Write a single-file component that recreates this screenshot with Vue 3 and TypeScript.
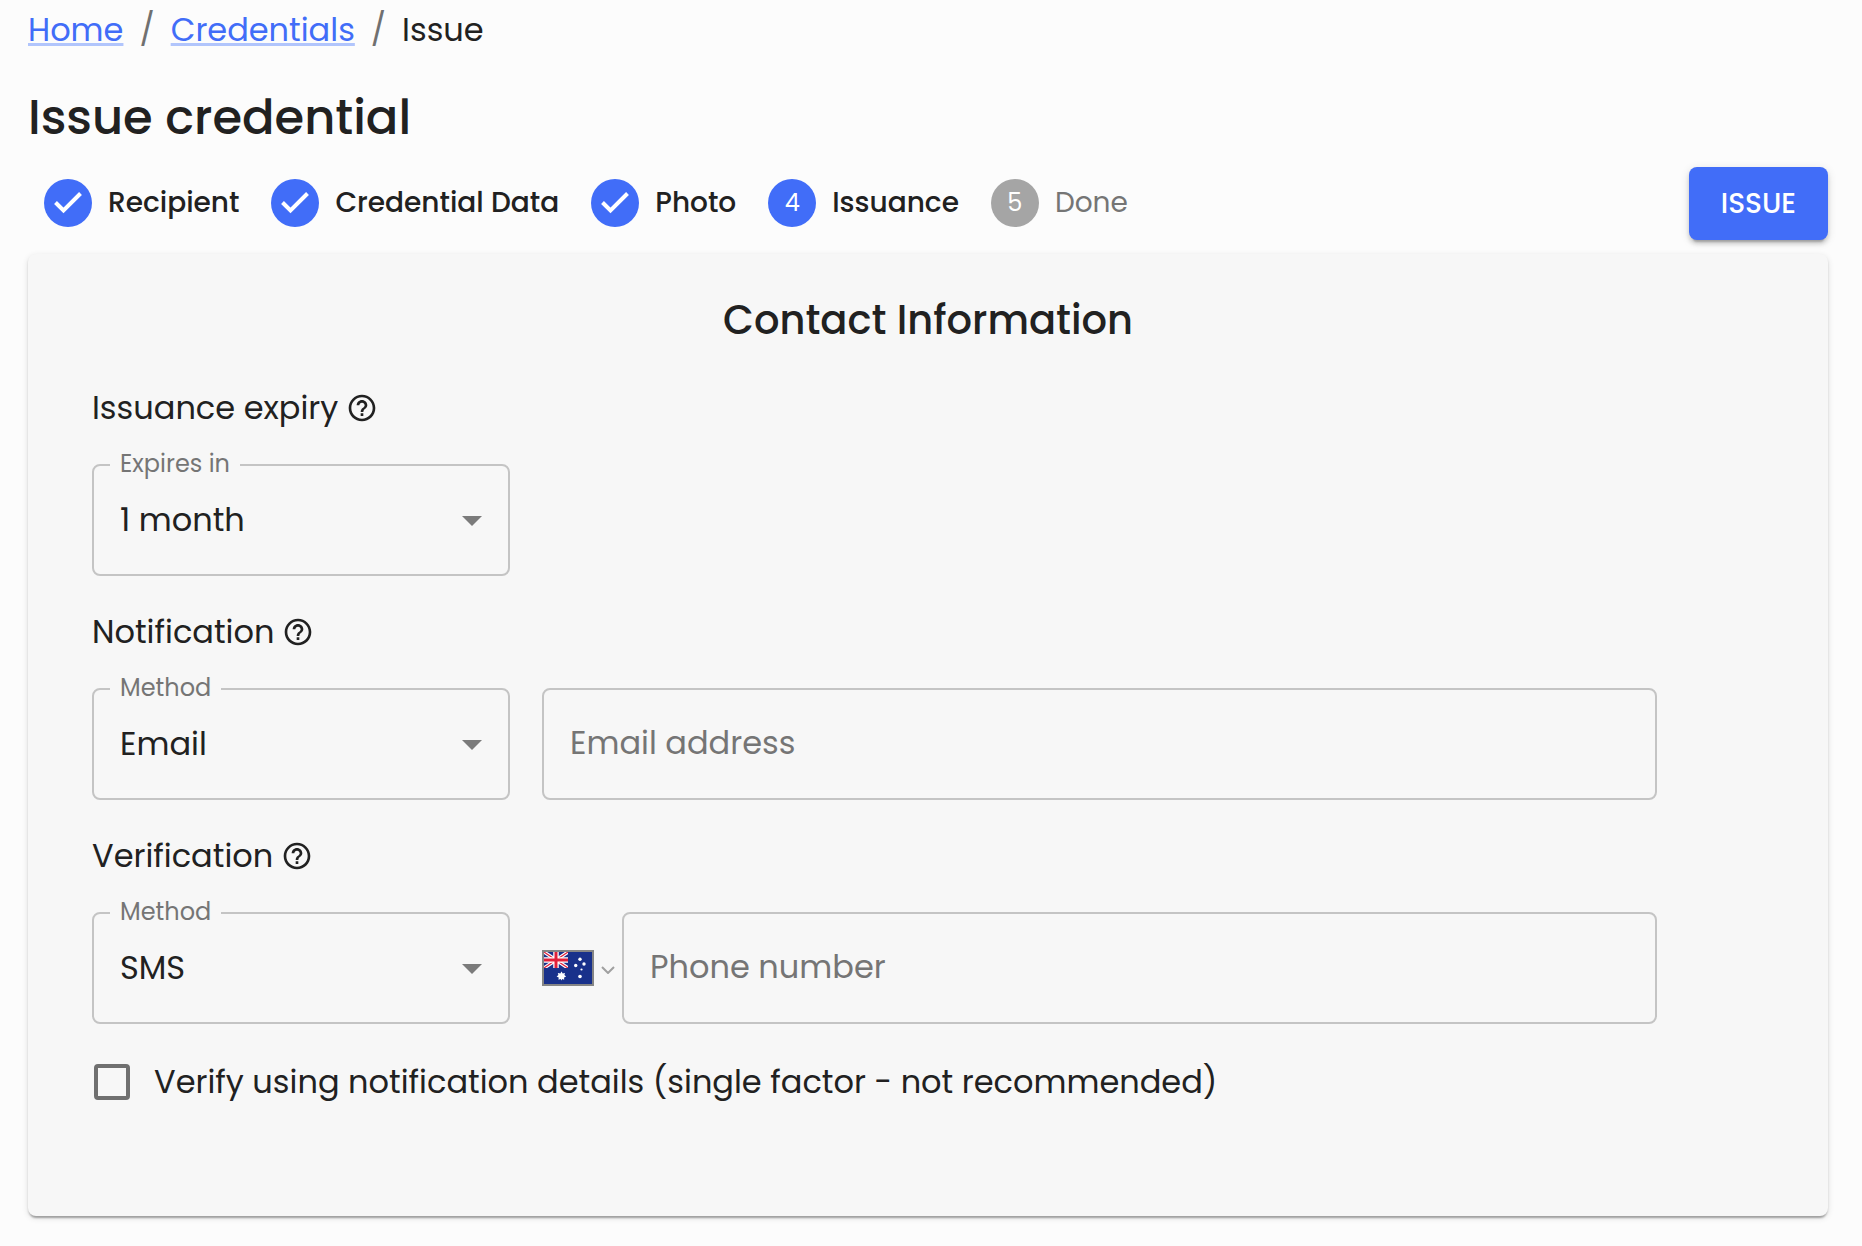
<script setup lang="ts">
import { ref } from 'vue'

interface Step {
  label: string
  state: 'done' | 'current' | 'todo'
}

const steps: Step[] = [
  { label: 'Recipient', state: 'done' },
  { label: 'Credential Data', state: 'done' },
  { label: 'Photo', state: 'done' },
  { label: 'Issuance', state: 'current' },
  { label: 'Done', state: 'todo' },
]

const expiry = ref('1 month')
const notifyBy = ref('Email')
const verifyBy = ref('SMS')
const email = ref('')
const phone = ref('')
const singleFactor = ref(false)

const helpPath =
  'M11 18h2v-2h-2v2zm1-16C6.48 2 2 6.48 2 12s4.48 10 10 10 10-4.480 10-10S17.520 2 12 2zm0 18c-4.410 0-8-3.590-8-8s3.590-8 8-8 8 3.590 8 8-3.590 8-8 8zm0-14c-2.210 0-4 1.790-4 4h2c0-1.100.9-2 2-2s2 .9 2 2c0 2-3 1.750-3 5h2c0-2.250 3-2.500 3-5 0-2.210-1.790-4-4-4z'
</script>

<template>
  <main class="page">
    <nav class="crumbs" aria-label="Breadcrumb">
      <a href="#home">Home</a>
      <span class="slash">/</span>
      <a href="#credentials">Credentials</a>
      <span class="slash">/</span>
      <span>Issue</span>
    </nav>

    <h1 class="title">Issue credential</h1>

    <div class="toolbar">
      <ol class="steps">
        <li v-for="(step, i) in steps" :key="step.label" class="step" :class="step.state">
          <span class="dot">
            <svg v-if="step.state === 'done'" class="tick" viewBox="0 0 48 48" aria-hidden="true">
              <path d="M11.500 23.500l8 8L36.500 14.500" />
            </svg>
            <template v-else>{{ i + 1 }}</template>
          </span>
          <span class="step-label">{{ step.label }}</span>
        </li>
      </ol>
      <button type="button" class="issue">ISSUE</button>
    </div>

    <form class="card" @submit.prevent>
      <h2 class="card-title">Contact Information</h2>

      <section class="group">
        <h3 class="group-title">
          Issuance expiry
          <svg class="help" viewBox="0 0 24 24" aria-hidden="true"><path :d="helpPath" /></svg>
        </h3>
        <div class="row">
          <div class="field narrow">
            <label class="float" for="expiry">Expires in</label>
            <select id="expiry" v-model="expiry" class="control">
              <option>1 month</option>
            </select>
            <svg class="caret" viewBox="0 0 20 10" aria-hidden="true"><path d="M0 0h20L10 10z" /></svg>
          </div>
        </div>
      </section>

      <section class="group">
        <h3 class="group-title">
          Notification
          <svg class="help" viewBox="0 0 24 24" aria-hidden="true"><path :d="helpPath" /></svg>
        </h3>
        <div class="row">
          <div class="field narrow">
            <label class="float" for="notify">Method</label>
            <select id="notify" v-model="notifyBy" class="control">
              <option>Email</option>
            </select>
            <svg class="caret" viewBox="0 0 20 10" aria-hidden="true"><path d="M0 0h20L10 10z" /></svg>
          </div>
          <div class="wide">
            <div class="field grow">
              <input v-model="email" class="control" type="email" placeholder="Email address" aria-label="Email address" />
            </div>
          </div>
        </div>
      </section>

      <section class="group">
        <h3 class="group-title">
          Verification
          <svg class="help" viewBox="0 0 24 24" aria-hidden="true"><path :d="helpPath" /></svg>
        </h3>
        <div class="row">
          <div class="field narrow">
            <label class="float" for="verify">Method</label>
            <select id="verify" v-model="verifyBy" class="control">
              <option>SMS</option>
            </select>
            <svg class="caret" viewBox="0 0 20 10" aria-hidden="true"><path d="M0 0h20L10 10z" /></svg>
          </div>
          <div class="wide">
            <button type="button" class="country" aria-label="Country: Australia">
              <svg class="flag" viewBox="0 0 48 32" aria-hidden="true">
                <path fill="#19318b" d="M0 0h48v32H0z" />
                <path stroke="#fff" stroke-width="3.500" d="M0 0l24 16M24 0L0 16" />
                <path stroke="#e0203a" stroke-width="1.200" d="M0 0l24 16M24 0L0 16" />
                <path stroke="#fff" stroke-width="5.500" d="M12 0v16M0 8h24" />
                <path stroke="#e0203a" stroke-width="3" d="M12 0v16M0 8h24" />
                <path fill="#19318b" d="M0 16h26v2H0zM24 0h2v18h-2z" />
                <g fill="#fff">
                  <path d="M17.500 19.500l1.200 2 2.300-.6-.6 2.200 1.700 1.400-2 1 .1 2.300-2-.8-.7 1.500-.9-1.500-2.100.8.2-2.300-2.100-1 1.800-1.400-.6-2.200 2.500.6z" />
                  <circle cx="36" cy="7.300" r="1.700" />
                  <circle cx="31.700" cy="13.500" r="1.700" />
                  <circle cx="40" cy="12" r="1.700" />
                  <circle cx="37.500" cy="17.500" r="1.100" />
                  <circle cx="36" cy="24.500" r="1.800" />
                </g>
              </svg>
              <svg class="chevron" viewBox="0 0 14 8" aria-hidden="true"><path d="M1 1l6 6 6-6" /></svg>
            </button>
            <div class="field grow">
              <input v-model="phone" class="control" type="tel" placeholder="Phone number" aria-label="Phone number" />
            </div>
          </div>
        </div>
      </section>

      <label class="check">
        <input v-model="singleFactor" type="checkbox" />
        <span>Verify using notification details (single factor - not recommended)</span>
      </label>
    </form>
  </main>
</template>

<style>
body {
  margin: 0;
  background: #fcfcfc;
}
</style>

<style scoped>
.page {
  box-sizing: border-box;
  padding: 0 34px 24px 28px;
  color: #212121;
  font-family: Poppins, Inter, 'Liberation Sans', sans-serif;
  font-size: 32px;
  line-height: 48px;
}

.crumbs {
  display: flex;
  align-items: center;
  gap: 16px;
  height: 60px;
}

.crumbs a {
  color: #416df8;
  text-decoration: underline;
  text-decoration-color: #b1c5fc;
  text-decoration-thickness: 3px;
  text-underline-offset: 2px;
  text-decoration-skip-ink: none;
}

.slash {
  color: #707070;
}

.title {
  margin: 25px 0 17px;
  font-size: 48px;
  font-weight: 500;
  line-height: 65px;
}

.toolbar {
  display: flex;
  align-items: center;
  justify-content: space-between;
  margin-bottom: 14px;
}

.steps {
  display: flex;
  gap: 32px;
  margin: 0;
  padding: 0 0 1px 16px;
  list-style: none;
}

.step {
  display: flex;
  align-items: center;
  gap: 16px;
  font-size: 28px;
  font-weight: 500;
}

.dot {
  display: flex;
  align-items: center;
  justify-content: center;
  width: 48px;
  height: 48px;
  border-radius: 50%;
  background: #416df8;
  color: #fff;
  font-size: 24px;
  font-weight: 400;
}

.todo .dot {
  background: #a5a5a5;
}

.todo .step-label {
  color: #757575;
  font-weight: 400;
}

.tick {
  width: 48px;
  height: 48px;
  fill: none;
  stroke: #fff;
  stroke-width: 4;
}

.issue {
  height: 73px;
  padding: 0 32px;
  border: 0;
  border-radius: 8px;
  background: #416df8;
  box-shadow: 0 6px 2px -4px rgba(0, 0, 0, 0.2), 0 4px 4px rgba(0, 0, 0, 0.14), 0 2px 10px rgba(0, 0, 0, 0.12);
  color: #fff;
  font-family: inherit;
  font-size: 28px;
  font-weight: 500;
}

.card {
  padding: 36px 64px 106px;
  border-radius: 8px;
  background: #f7f7f7;
  box-shadow: 0 4px 2px -2px rgba(0, 0, 0, 0.2), 0 2px 2px rgba(0, 0, 0, 0.14), 0 2px 6px rgba(0, 0, 0, 0.12);
}

.card-title {
  margin: 0 0 32px;
  font-size: 40px;
  font-weight: 500;
  line-height: 60px;
  text-align: center;
}

.group {
  margin-bottom: 30px;
}

.group-title {
  display: flex;
  align-items: center;
  gap: 8px;
  margin: 0 0 30px;
  font-size: 32px;
  font-weight: 400;
  line-height: 52px;
}

.help {
  width: 32px;
  height: 32px;
  fill: #212121;
}

.row {
  display: flex;
  gap: 32px;
}

.field {
  position: relative;
  box-sizing: border-box;
  height: 112px;
  border: 2px solid #c4c4c4;
  border-radius: 8px;
}

.narrow {
  flex: 0 0 25%;
}

.wide {
  display: flex;
  flex: 0 0 66.6667%;
}

.grow {
  flex: 1;
}

.control {
  box-sizing: border-box;
  width: 100%;
  height: 100%;
  padding: 0 26px;
  border: 0;
  outline: 0;
  background: transparent;
  color: #212121;
  font: inherit;
  appearance: none;
}

input.control {
  padding-bottom: 2px;
}

.control::placeholder {
  color: #757575;
  opacity: 1;
}

.float {
  position: absolute;
  top: -18px;
  left: 16px;
  padding: 0 10px;
  background: #f7f7f7;
  color: #757575;
  font-size: 24px;
  line-height: 32px;
}

.caret {
  position: absolute;
  top: 50px;
  right: 26px;
  width: 20px;
  height: 10px;
  fill: #7b7b7b;
  pointer-events: none;
}

.country {
  display: flex;
  align-items: center;
  gap: 7px;
  width: 80px;
  padding: 0;
  border: 0;
  background: transparent;
}

.flag {
  width: 48px;
  height: 32px;
  border: 2px solid #858585;
}

.chevron {
  width: 14px;
  height: 8px;
  margin-top: 4px;
  fill: none;
  stroke: #a0a0a0;
  stroke-width: 2;
}

.check {
  display: flex;
  align-items: center;
  gap: 24px;
  padding: 4px 2px;
}

.check input {
  flex: none;
  box-sizing: border-box;
  width: 36px;
  height: 36px;
  margin: 0;
  border: 4px solid #707070;
  border-radius: 4px;
  appearance: none;
}

.check input:checked {
  border-color: #416df8;
  background: #416df8;
}
</style>
